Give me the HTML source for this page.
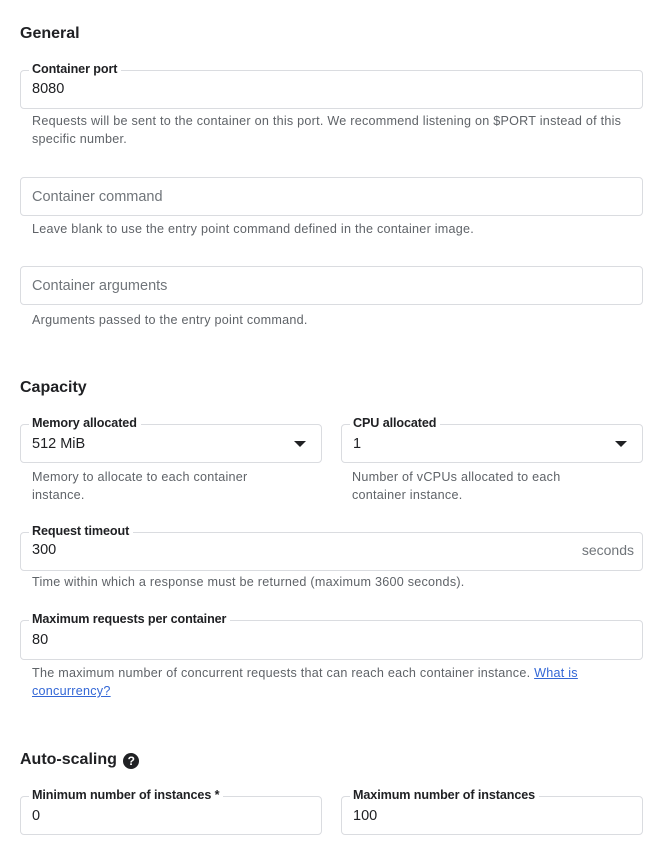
<!DOCTYPE html><html><head><style>
body{margin:0;width:666px;height:846px;background:#fff;font-family:"Liberation Sans",sans-serif;position:relative;overflow:hidden;color:#202124}
.h{position:absolute;left:20px;font-size:16px;font-weight:bold;line-height:20px}
.f{position:absolute;border:1px solid #dadce0;border-radius:4px;box-sizing:border-box;height:39px}
.l{position:absolute;left:8px;top:-11px;background:#fff;padding:0 4px 0 3px;font-size:12.6px;font-weight:bold;line-height:18px;color:#202124;letter-spacing:-0.1px}
.v{position:absolute;left:11px;top:9px;font-size:14.5px;line-height:20px}
.p{color:#70757a}
.t{position:absolute;font-size:12.6px;line-height:18px;color:#5f6368;letter-spacing:0.25px}
.a{position:absolute;right:15px;top:16px;width:0;height:0;border-left:6px solid transparent;border-right:6px solid transparent;border-top:6px solid #202124}
a{color:#3367d6;text-decoration:underline}
</style></head><body>
<div class="h" style="top:24px">General</div>
<div class="f" style="left:20px;top:70px;width:623px"><div class="l">Container port</div><div class="v" style="top:8px">8080</div></div>
<div class="t" style="left:32px;top:112px;width:600px">Requests will be sent to the container on this port. We recommend listening on $PORT instead of this specific number.</div>
<div class="f" style="left:20px;top:177px;width:623px"><div class="v p">Container command</div></div>
<div class="t" style="left:32px;top:220px">Leave blank to use the entry point command defined in the container image.</div>
<div class="f" style="left:20px;top:266px;width:623px"><div class="v p">Container arguments</div></div>
<div class="t" style="left:32px;top:311px">Arguments passed to the entry point command.</div>
<div class="h" style="top:378px">Capacity</div>
<div class="f" style="left:20px;top:424px;width:302px"><div class="l">Memory allocated</div><div class="v" style="top:9px">512 MiB</div><div class="a"></div></div>
<div class="f" style="left:341px;top:424px;width:302px"><div class="l">CPU allocated</div><div class="v" style="top:9px">1</div><div class="a"></div></div>
<div class="t" style="left:32px;top:468px;width:250px">Memory to allocate to each container instance.</div>
<div class="t" style="left:352px;top:468px;width:250px">Number of vCPUs allocated to each container instance.</div>
<div class="f" style="left:20px;top:532px;width:623px"><div class="l">Request timeout</div><div class="v" style="top:7px">300</div><div class="t" style="right:8px;top:8px;font-size:14px;color:#70757a;letter-spacing:0">seconds</div></div>
<div class="t" style="left:32px;top:573px">Time within which a response must be returned (maximum 3600 seconds).</div>
<div class="f" style="left:20px;top:620px;width:623px;height:40px"><div class="l">Maximum requests per container</div><div class="v" style="top:9px">80</div></div>
<div class="t" style="left:32px;top:664px;width:590px">The maximum number of concurrent requests that can reach each container instance. <a>What is concurrency?</a></div>
<div class="h" style="top:750px">Auto-scaling <span style="display:inline-block;width:16px;height:16px;border-radius:50%;background:#202124;color:#fff;font-size:12px;line-height:16px;text-align:center;vertical-align:-1px;margin-left:2px">?</span></div>
<div class="f" style="left:20px;top:796px;width:302px"><div class="l">Minimum number of instances *</div><div class="v" style="top:9px">0</div></div>
<div class="f" style="left:341px;top:796px;width:302px"><div class="l">Maximum number of instances</div><div class="v" style="top:9px">100</div></div>
</body></html>
